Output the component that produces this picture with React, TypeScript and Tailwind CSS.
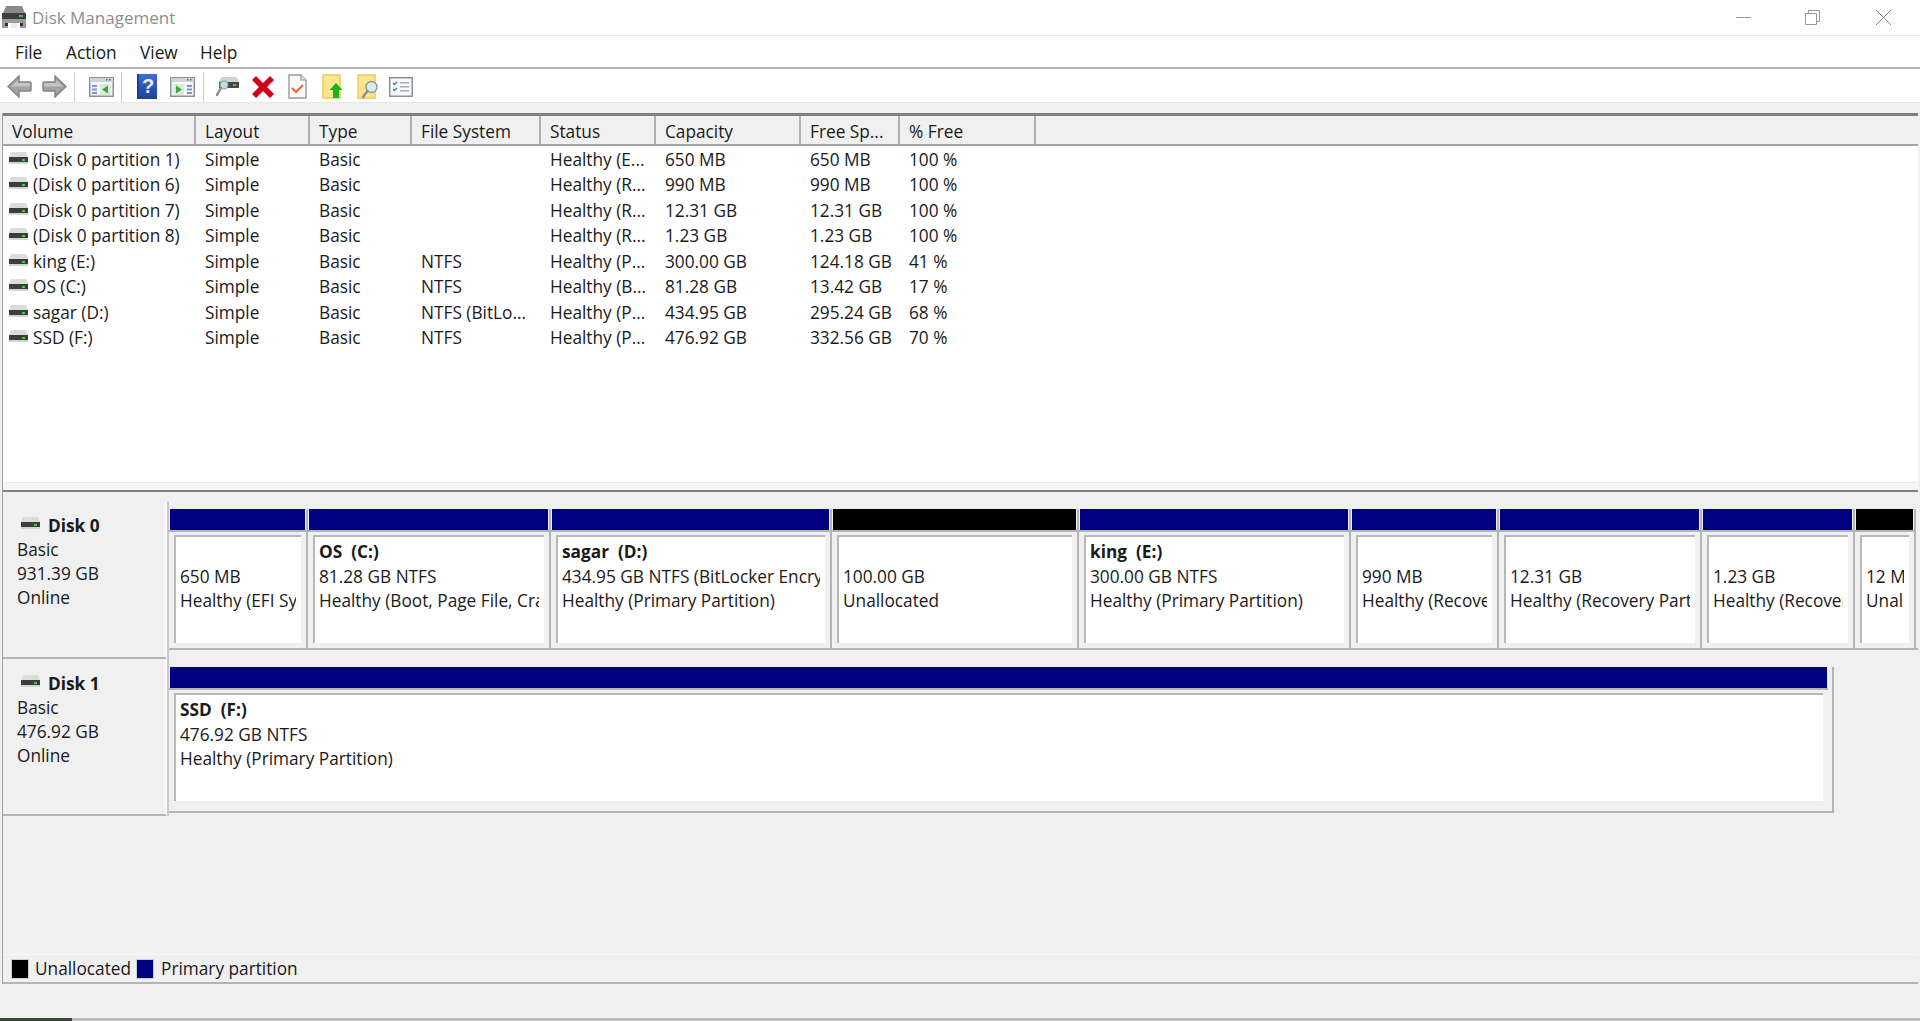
import React from 'react';

const columns = [
  { label: 'Volume', w: 193 },
  { label: 'Layout', w: 114 },
  { label: 'Type', w: 102 },
  { label: 'File System', w: 129 },
  { label: 'Status', w: 115 },
  { label: 'Capacity', w: 145 },
  { label: 'Free Sp...', w: 99 },
  { label: '% Free', w: 136 },
];

const rows = [
  ['(Disk 0 partition 1)', 'Simple', 'Basic', '', 'Healthy (E...', '650 MB', '650 MB', '100 %'],
  ['(Disk 0 partition 6)', 'Simple', 'Basic', '', 'Healthy (R...', '990 MB', '990 MB', '100 %'],
  ['(Disk 0 partition 7)', 'Simple', 'Basic', '', 'Healthy (R...', '12.31 GB', '12.31 GB', '100 %'],
  ['(Disk 0 partition 8)', 'Simple', 'Basic', '', 'Healthy (R...', '1.23 GB', '1.23 GB', '100 %'],
  ['king (E:)', 'Simple', 'Basic', 'NTFS', 'Healthy (P...', '300.00 GB', '124.18 GB', '41 %'],
  ['OS (C:)', 'Simple', 'Basic', 'NTFS', 'Healthy (B...', '81.28 GB', '13.42 GB', '17 %'],
  ['sagar (D:)', 'Simple', 'Basic', 'NTFS (BitLo...', 'Healthy (P...', '434.95 GB', '295.24 GB', '68 %'],
  ['SSD (F:)', 'Simple', 'Basic', 'NTFS', 'Healthy (P...', '476.92 GB', '332.56 GB', '70 %'],
];

type Part = { w: number; name: string; size: string; status: string; free?: boolean };

const disk0: Part[] = [
  { w: 139, name: '', size: '650 MB', status: 'Healthy (EFI System Partition)' },
  { w: 243, name: 'OS  (C:)', size: '81.28 GB NTFS', status: 'Healthy (Boot, Page File, Crash Dump)' },
  { w: 281, name: 'sagar  (D:)', size: '434.95 GB NTFS (BitLocker Encrypted)', status: 'Healthy (Primary Partition)' },
  { w: 247, name: '', size: '100.00 GB', status: 'Unallocated', free: true },
  { w: 272, name: 'king  (E:)', size: '300.00 GB NTFS', status: 'Healthy (Primary Partition)' },
  { w: 148, name: '', size: '990 MB', status: 'Healthy (Recovery Partition)' },
  { w: 203, name: '', size: '12.31 GB', status: 'Healthy (Recovery Partition)' },
  { w: 153, name: '', size: '1.23 GB', status: 'Healthy (Recovery Partition)' },
  { w: 61, name: '', size: '12 MB', status: 'Unallocated', free: true },
];

function DriveIcon() {
  return (
    <svg width="21" height="15" viewBox="0 0 21 15" className="shrink-0">
      <path d="M3 1h15l2 5H1z" fill="#dcdcdc" />
      <rect x="1" y="6" width="19" height="5" fill="#3c3c3c" />
      <rect x="14" y="8" width="3" height="2" fill="#39d239" />
      <rect x="1" y="11" width="19" height="2" fill="#d4d4d4" />
    </svg>
  );
}

function AppIcon() {
  return (
    <svg width="24" height="23" viewBox="0 0 24 23" className="shrink-0 ml-[2px]">
      <path d="M4 0h16l3 7H1z" fill="#8a8a8a" />
      <rect x="0" y="7" width="24" height="6" fill="#3f3f3f" />
      <rect x="17" y="9" width="4" height="2" fill="#35d135" />
      <path d="M0 13h24v9h-6v-5H6v5H0z" fill="#9c9c9c" />
      <rect x="3" y="17" width="3" height="3" fill="#333" />
      <rect x="18" y="17" width="3" height="3" fill="#333" />
      <rect x="9" y="17" width="6" height="5" fill="#ececec" />
    </svg>
  );
}

function NavArrow({ flip }: { flip?: boolean }) {
  return (
    <svg width="25" height="23" viewBox="0 0 25 23" className={flip ? 'shrink-0 -scale-x-100' : 'shrink-0'}>
      <path d="M12 1 1 11.5 12 22v-6h11a1 1 0 0 0 1-1V8a1 1 0 0 0-1-1H12z" fill="#a2a2a2" stroke="#858585" strokeWidth="1.5" />
      <path d="M11 5 4 11.5H23V8H11z" fill="#c4c4c4" />
    </svg>
  );
}

function PanelIcon({ flip }: { flip?: boolean }) {
  return (
    <svg width="25" height="20" viewBox="0 0 25 20" className="shrink-0">
      <rect x="0.75" y="0.75" width="23.5" height="18.5" fill="#f6f8fa" stroke="#8b9099" strokeWidth="1.5" />
      <rect x="1" y="1" width="23" height="4" fill="#cfd4da" />
      <rect x="17" y="2" width="1.5" height="1.5" fill="#666" />
      <rect x="20" y="2" width="1.5" height="1.5" fill="#666" />
      {flip ? (
        <>
          <rect x="3" y="7" width="11" height="11" fill="#dfe8df" />
          <path d="M6 8.5v8l6-4z" fill="#3aa93a" />
          <rect x="17" y="8" width="5" height="2" fill="#7d97c4" />
          <rect x="17" y="11.5" width="5" height="2" fill="#7d97c4" />
          <rect x="17" y="15" width="5" height="2" fill="#7d97c4" />
        </>
      ) : (
        <>
          <rect x="3" y="8" width="5" height="2" fill="#7d97c4" />
          <rect x="3" y="11.5" width="5" height="2" fill="#7d97c4" />
          <rect x="3" y="15" width="5" height="2" fill="#7d97c4" />
          <rect x="11" y="7" width="11" height="11" fill="#dfe8df" />
          <path d="M19 8.5v8l-6-4z" fill="#3aa93a" />
        </>
      )}
    </svg>
  );
}

function HelpIcon() {
  return (
    <svg width="20" height="25" viewBox="0 0 20 25" className="shrink-0">
      <defs>
        <linearGradient id="helpBlue" x1="0" y1="0" x2="0" y2="1">
          <stop offset="0" stopColor="#3d6fd6" />
          <stop offset="1" stopColor="#1f3f9a" />
        </linearGradient>
      </defs>
      <rect x="0" y="0" width="20" height="25" fill="url(#helpBlue)" />
      <rect x="0" y="0" width="2" height="25" fill="#1d3a8c" />
      <text x="11" y="19" textAnchor="middle" fontSize="20" fontWeight="700" fill="#e8ecf8" fontFamily="Liberation Sans, sans-serif">?</text>
    </svg>
  );
}

function DiskSearchIcon() {
  return (
    <svg width="24" height="21" viewBox="0 0 24 21" className="shrink-0">
      <path d="M6 1h14l3 4v7H3V5z" fill="#d2d2d2" />
      <rect x="3" y="6" width="20" height="6" fill="#484848" />
      <rect x="17" y="8" width="3" height="2" fill="#35d135" />
      <circle cx="8" cy="9" r="4" fill="#bfe0e8" stroke="#8a9aa0" strokeWidth="1.2" />
      <path d="M5 12 1 19" stroke="#8b8b8b" strokeWidth="2.4" strokeLinecap="round" />
    </svg>
  );
}

function RedX() {
  return (
    <svg width="22" height="22" viewBox="0 0 22 22" className="shrink-0">
      <path d="M4 0 11 7l7-7 4 4-7 7 7 7-4 4-7-7-7 7-4-4 7-7-7-7z" fill="#d2001a" />
    </svg>
  );
}

function DocCheckIcon() {
  return (
    <svg width="19" height="25" viewBox="0 0 19 25" className="shrink-0">
      <path d="M1 1h12l5 5v18H1z" fill="#fafafa" stroke="#9b9b9b" strokeWidth="1.4" />
      <path d="M13 1v5h5" fill="#e6e6e6" stroke="#9b9b9b" strokeWidth="1.2" />
      <path d="M4 14l4 4 7-7" fill="none" stroke="#e8663c" strokeWidth="2" />
    </svg>
  );
}

function FolderUpIcon() {
  return (
    <svg width="21" height="25" viewBox="0 0 21 25" className="shrink-0">
      <rect x="1" y="1" width="17" height="23" fill="#fde68f" stroke="#efc95a" strokeWidth="1.5" />
      <path d="M14 9l6.5 7H17v8h-6v-8H7.5z" fill="#17b317" />
    </svg>
  );
}

function FolderSearchIcon() {
  return (
    <svg width="22" height="25" viewBox="0 0 22 25" className="shrink-0">
      <rect x="1" y="1" width="17" height="23" fill="#fde68f" stroke="#efc95a" strokeWidth="1.5" />
      <circle cx="14.5" cy="13" r="5.5" fill="#dce9ef" stroke="#8a9aa0" strokeWidth="1.4" />
      <path d="M10.5 17 6 23" stroke="#8b8b8b" strokeWidth="2.2" strokeLinecap="round" />
    </svg>
  );
}

function ChecklistIcon() {
  return (
    <svg width="24" height="20" viewBox="0 0 24 20" className="shrink-0">
      <rect x="0.75" y="0.75" width="22.5" height="18.5" fill="#f7f9fb" stroke="#8b9099" strokeWidth="1.5" />
      <path d="M4 6l1.5 1.5L8 5M4 12l1.5 1.5L8 11" fill="none" stroke="#2f7fd8" strokeWidth="1.3" />
      <rect x="11" y="5" width="9" height="1.5" fill="#a8adb3" />
      <rect x="11" y="9" width="9" height="1.5" fill="#a8adb3" />
      <rect x="11" y="13" width="9" height="1.5" fill="#a8adb3" />
    </svg>
  );
}

function Partition({ p }: { p: Part }) {
  return (
    <div className="shrink-0 flex flex-col h-full border-r-2 border-[#b4b4b4]" style={{ width: p.w }}>
      <div className={p.free ? 'h-[21px] mx-[1px] bg-black' : 'h-[21px] mx-[1px] bg-[#000080]'} />
      <div className="h-[2px] bg-[#b4b4b4]" />
      <div className="mx-[5px] mt-[3px] h-[108px] bg-white border-l-2 border-t-2 border-[#b8b8b8] pl-[4px] pr-[5px] pt-[3px] overflow-hidden whitespace-pre leading-[24.5px]">
        <div className="h-[24.5px] font-bold">{p.name}</div>
        <div className="overflow-hidden">{p.size}</div>
        <div className="overflow-hidden">{p.status}</div>
      </div>
    </div>
  );
}

function DiskLabel({ name, size, top }: { name: string; size: string; top: string }) {
  return (
    <div className={`w-[164px] shrink-0 bg-[#f0f0f0] border-b-2 border-r-2 border-r-[#fafafa] border-b-[#b4b4b4] pl-[14px] leading-[24px] ${top}`}>
      <div className="flex items-center gap-[7px] pl-[3px] font-bold">
        <span className="-mt-[6px]">
          <DriveIcon />
        </span>
        <span>{name}</span>
      </div>
      <div>Basic</div>
      <div>{size}</div>
      <div>Online</div>
    </div>
  );
}

export default function App() {
  return (
    <div className="w-[1920px] h-[1021px] flex flex-col overflow-hidden bg-[#f0f0f0] text-[#1a1a1a] text-[17.25px] font-['Open_Sans',sans-serif]">
      {/* title bar */}
      <div className="h-[36px] shrink-0 bg-white flex items-center border-b border-[#e8e8e8]">
        <AppIcon />
        <span className="ml-[6px] text-[17px] text-[#8e8e8e]">Disk Management</span>
        <div className="ml-auto flex items-center pr-[29px]">
          <div className="w-[15px] h-[1px] bg-[#999]" />
          <svg width="15" height="15" viewBox="0 0 15 15" className="ml-[54px]">
            <path d="M.5 3.5h11v11H.5zM3.5 3.5v-3h11v11h-3" fill="none" stroke="#999" />
          </svg>
          <svg width="15" height="15" viewBox="0 0 15 15" className="ml-[56px]">
            <path d="M0 0 15 15M15 0 0 15" fill="none" stroke="#888" />
          </svg>
        </div>
      </div>

      {/* menu */}
      <div className="h-[33px] shrink-0 bg-white flex items-center pl-[15px] pt-[2px] border-b-2 border-[#b4b4b4]">
        <span className="w-[51px]">File</span>
        <span className="w-[74px]">Action</span>
        <span className="w-[60px]">View</span>
        <span>Help</span>
      </div>

      {/* toolbar */}
      <div className="h-[34px] shrink-0 bg-white flex items-center pl-[7px] border-b border-[#e8e8e8] pt-[2px]">
        <NavArrow />
        <div className="w-[10px]" />
        <NavArrow flip />
        <div className="w-[1px] h-[30px] bg-[#cccccc] ml-[7px] mr-[14px]" />
        <PanelIcon />
        <div className="w-[1px] h-[30px] bg-[#cccccc] ml-[7px] mr-[15px]" />
        <HelpIcon />
        <div className="w-[13px]" />
        <PanelIcon flip />
        <div className="w-[1px] h-[30px] bg-[#cccccc] ml-[8px] mr-[12px]" />
        <DiskSearchIcon />
        <div className="w-[12px]" />
        <RedX />
        <div className="w-[14px]" />
        <DocCheckIcon />
        <div className="w-[15px]" />
        <FolderUpIcon />
        <div className="w-[14px]" />
        <FolderSearchIcon />
        <div className="w-[10px]" />
        <ChecklistIcon />
      </div>

      <div className="h-[10px] shrink-0" />

      {/* body */}
      <div className="flex-1 flex flex-col min-h-0 ml-[2px] mr-[2px] border-l border-[#a0a0a0]">
        {/* volume list */}
        <div className="h-[379px] shrink-0 flex flex-col bg-white border-t-[3px] border-t-[#808080] border-b-2 border-b-[#808080]">
          <div className="flex h-[30px] shrink-0 bg-[#f0f0f0] border-b-2 border-[#a4a4a4]">
            {columns.map((c) => (
              <div key={c.label} className="shrink-0 border-r-2 border-[#b0b0b0] pl-[9px] pt-[1px] leading-[30px]" style={{ width: c.w }}>
                {c.label}
              </div>
            ))}
          </div>
          <div className="flex-1 pt-[1px]">
            {rows.map((r) => (
              <div key={r[0]} className="flex h-[25.5px] items-center whitespace-nowrap">
                {r.map((cell, i) =>
                  i === 0 ? (
                    <div key={i} className="shrink-0 flex items-center gap-[4px] pl-[5px]" style={{ width: columns[i].w }}>
                      <span className="-mt-[3px]">
                        <DriveIcon />
                      </span>
                      <span>{cell}</span>
                    </div>
                  ) : (
                    <div key={i} className="shrink-0 pl-[9px]" style={{ width: columns[i].w }}>
                      {cell}
                    </div>
                  ),
                )}
              </div>
            ))}
          </div>
          <div className="h-[8px] shrink-0 bg-[#f6f6f6] border-t border-[#ececec]" />
        </div>

        <div className="h-[10px] shrink-0" />

        {/* disks */}
        <div className="flex h-[157px] shrink-0">
          <DiskLabel name="Disk 0" size="931.39 GB" top="pt-[12px]" />
          <div className="flex-1 flex flex-col border-l-2 border-[#c8c8c8] pt-[7px]">
            <div className="flex h-[141px] border-b-2 border-[#b4b4b4]">
              {disk0.map((p) => (
                <Partition key={p.size + p.status} p={p} />
              ))}
            </div>
          </div>
        </div>
        <div className="flex h-[157px] shrink-0">
          <DiskLabel name="Disk 1" size="476.92 GB" top="pt-[13px]" />
          <div className="flex-1 flex flex-col pt-[8px] border-l-2 border-[#c8c8c8]">
            <div className="w-[1665px] h-[146px] flex border-b-2 border-r-2 border-[#b4b4b4]">
              <div className="flex-1 flex flex-col mr-[4px]">
                <div className="h-[21px] mx-[1px] bg-[#000080]" />
                <div className="h-[2px] bg-[#b4b4b4]" />
                <div className="mx-[5px] mt-[3px] h-[108px] bg-white border-l-2 border-t-2 border-[#b8b8b8] pl-[4px] pt-[3px] whitespace-pre leading-[24.5px]">
                  <div className="h-[24.5px] font-bold">SSD  (F:)</div>
                  <div>476.92 GB NTFS</div>
                  <div>Healthy (Primary Partition)</div>
                </div>
              </div>
            </div>
          </div>
        </div>

        <div className="flex-1" />

        {/* legend */}
        <div className="h-[30px] shrink-0 flex items-center pl-[8px] pt-[1px] border-t border-[#f8f8f8] border-b-2 border-b-[#b4b4b4]">
          <div className="w-[18px] h-[20px] bg-black border border-[#d0d0d0]" />
          <span className="ml-[6px] w-[101px]">Unallocated</span>
          <div className="w-[18px] h-[20px] bg-[#000080] border border-[#d0d0d0]" />
          <span className="ml-[7px]">Primary partition</span>
        </div>
      </div>

      {/* status bar */}
      <div className="h-[34px] shrink-0" />
      <div className="h-[3px] shrink-0 flex bg-[#bdbdbd]">
        <div className="w-[72px] bg-[#3b4538]" />
      </div>
    </div>
  );
}
